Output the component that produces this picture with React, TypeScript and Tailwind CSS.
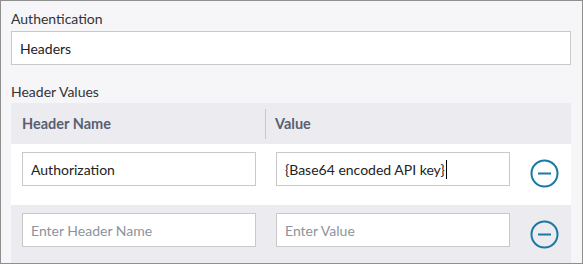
import React from "react";

type HeaderRow = {
  name: string;
  value: string;
  active?: boolean;
};

const rows: HeaderRow[] = [
  { name: "Authorization", value: "{Base64 encoded API key}", active: true },
  { name: "", value: "" },
];

const font = { fontFamily: 'Lato, "Open Sans", Arial, sans-serif' };

export default function App() {
  return (
    <div
      className="h-[264px] w-[583px] overflow-hidden border border-[#8f8f8f] bg-[#f6f6f8] pl-[10px] pr-[11px] text-[14px] text-[#2b2b2b]"
      style={font}
    >
      <p className="mt-[8px] leading-[20px] text-[#333]">Authentication</p>
      <div className="mt-[2px] flex h-[34px] items-center border border-[#c9c9c9] bg-white px-[8px] text-[#222]">
        Headers
      </div>

      <p className="mt-[17px] leading-[20px] text-[#333]">Header Values</p>
      <div className="mt-px">
        <div className="grid h-[41px] grid-cols-[255px_254px_1fr] items-center bg-[#ececf0] text-[14.5px] font-bold text-[#586070]">
          <div className="flex h-[30px] items-center border-r border-[#c8c8cc] pl-[11px]">Header Name</div>
          <div className="pl-[9px]">Value</div>
          <div />
        </div>
        {rows.map((row, i) => (
          <div
            key={i}
            className={`grid h-[61px] grid-cols-[255px_254px_1fr] pt-[8px] ${i % 2 === 0 ? "bg-white" : "bg-[#ececf0]"}`}
          >
            <div className="pl-[11px] pr-[10px]">
              <Field value={row.name} placeholder="Enter Header Name" />
            </div>
            <div className="pl-[10px] pr-[10px]">
              <Field value={row.value} placeholder="Enter Value" caret={row.active} />
            </div>
            <div className="flex items-start justify-center pt-[7px]">
              <MinusCircle />
            </div>
          </div>
        ))}
      </div>
    </div>
  );
}

function Field({ value, placeholder, caret }: { value: string; placeholder: string; caret?: boolean }) {
  return (
    <div className="flex h-[34px] items-center border border-[#c9c9c9] bg-white px-[8px]">
      {value ? (
        <span className="text-[#222]">{value}</span>
      ) : (
        <span className="text-[#8d939c]">{placeholder}</span>
      )}
      {caret ? <span className="ml-px h-[19px] w-px bg-black" /> : null}
    </div>
  );
}

function MinusCircle() {
  return (
    <svg width="29" height="29" viewBox="0 0 29 29" fill="none" className="ml-[-2px]">
      <circle cx="14.5" cy="14.5" r="13" stroke="#1a78a6" strokeWidth="2" />
      <line x1="8" y1="14.5" x2="21" y2="14.5" stroke="#1a78a6" strokeWidth="2" />
    </svg>
  );
}
